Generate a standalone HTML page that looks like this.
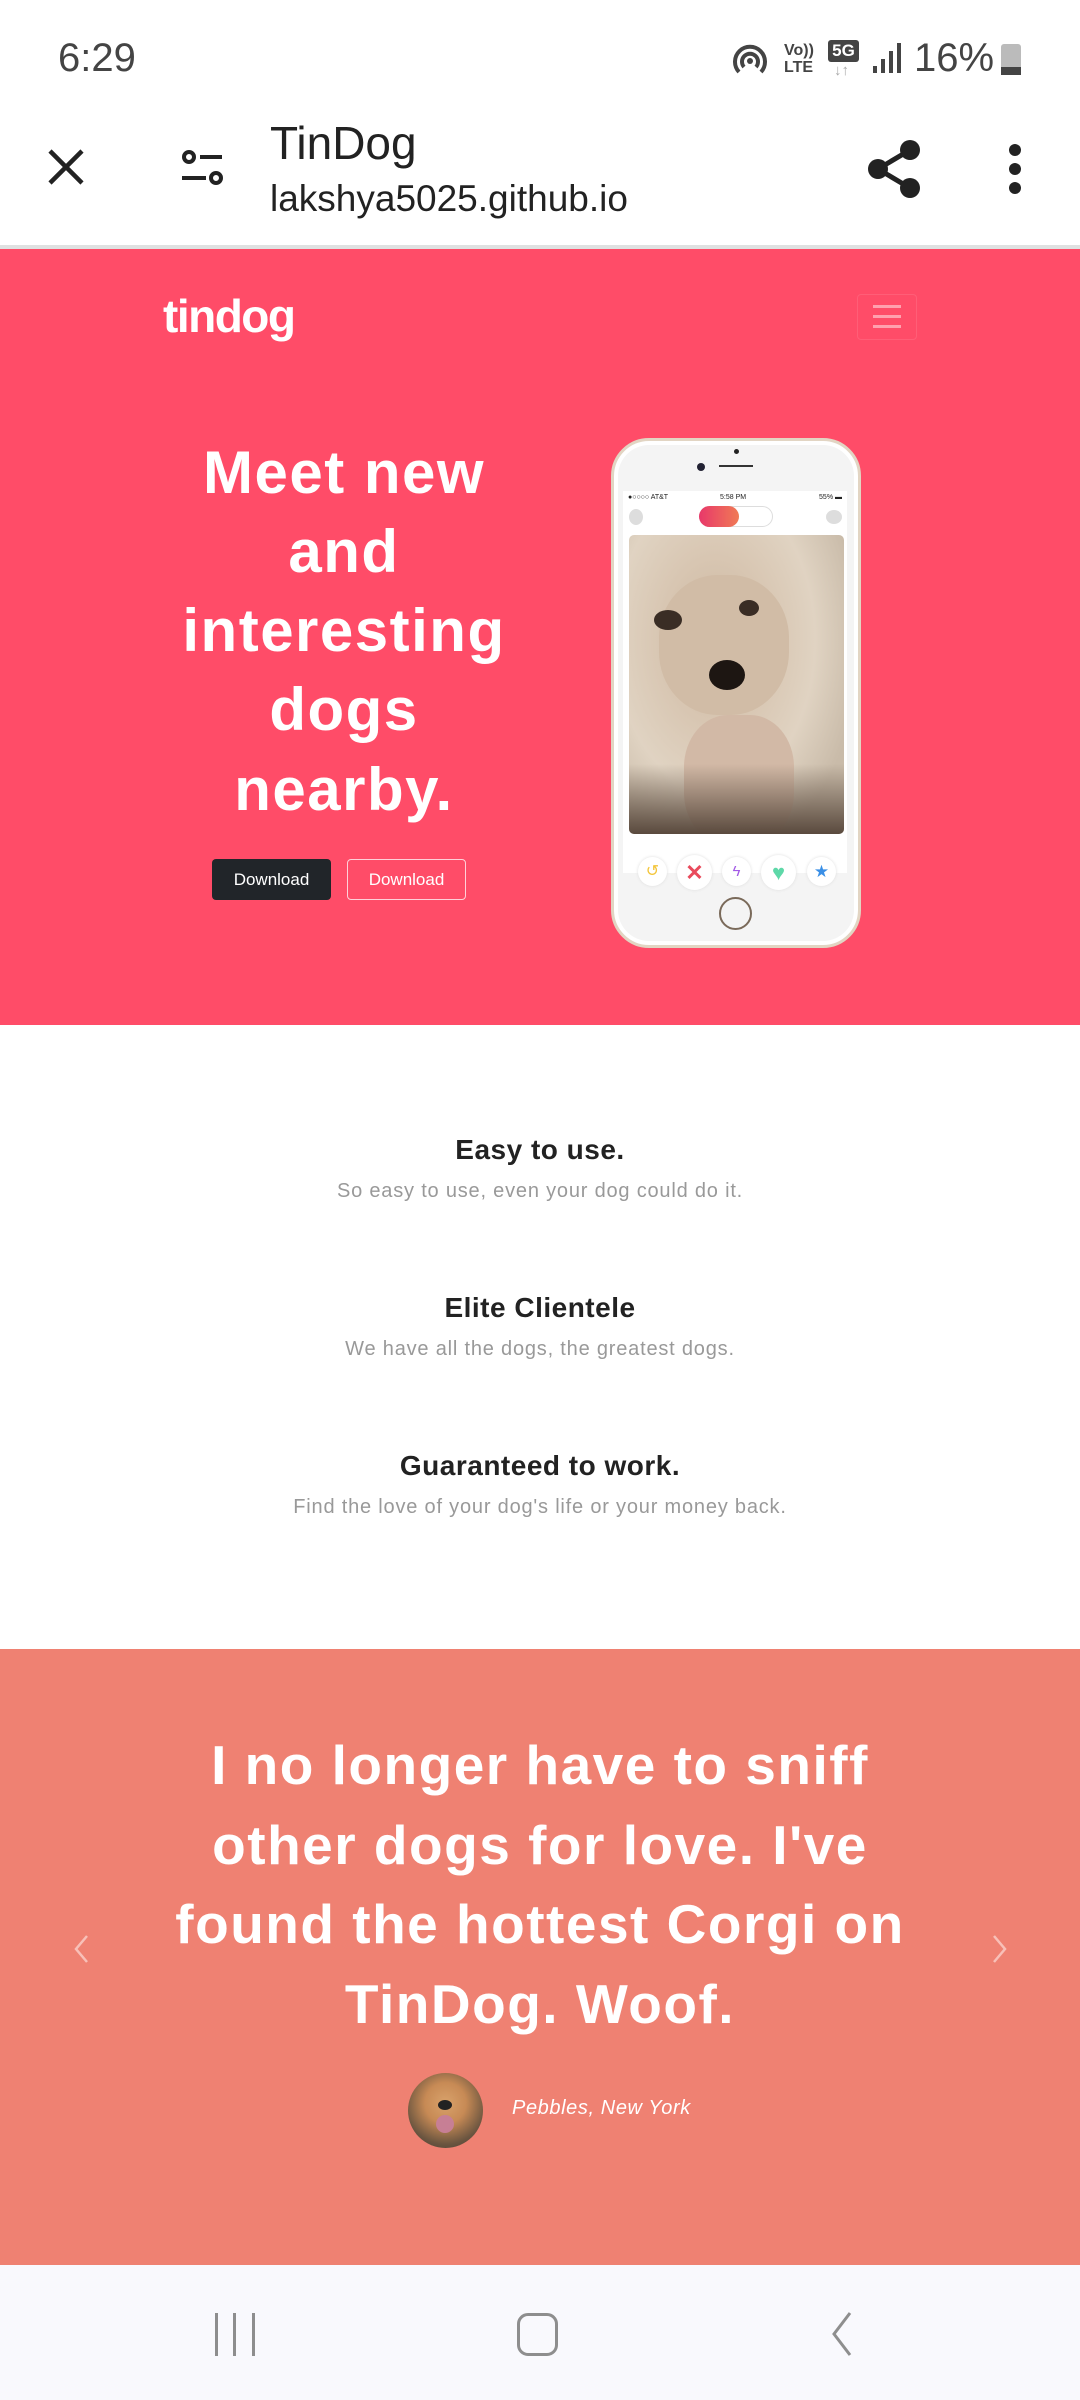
<!DOCTYPE html>
<html><head><meta charset="utf-8"><style>
*{margin:0;padding:0;box-sizing:border-box}
body{width:1080px;height:2400px;overflow:hidden;background:#fff;font-family:"Liberation Sans",sans-serif;position:relative}
.a{position:absolute}
.hl{position:absolute;left:0;width:688px;text-align:center;color:#fff;font-weight:900;font-size:60px;letter-spacing:1.5px}
.ft{position:absolute;left:0;width:1080px;text-align:center}
.ft b{display:block;font-size:28px;color:#222;letter-spacing:0.5px}
.sub{font-size:20px;color:#999;letter-spacing:0.8px}
.q{position:absolute;left:0;width:1080px;text-align:center;color:#fff;font-weight:bold;font-size:55px;letter-spacing:1.5px}
</style></head><body>
<!-- status bar -->
<div class="a" style="left:58px;top:36px;font-size:40px;color:#444">6:29</div>
<svg class="a" style="left:730px;top:40px" width="40" height="40" viewBox="0 0 40 40"><g fill="none" stroke="#444" stroke-width="4"><path d="M9 32a15 15 0 1 1 22 0"/><path d="M14 27a8 8 0 1 1 12 0"/></g><circle cx="20" cy="21" r="3" fill="#444"/></svg>
<div class="a" style="left:784px;top:42px;font-size:16px;line-height:17px;font-weight:bold;color:#444">Vo))<br>LTE</div>
<div class="a" style="left:828px;top:40px;width:31px;height:22px;background:#444;color:#fff;font-size:17px;font-weight:bold;text-align:center;line-height:22px;border-radius:3px">5G</div>
<div class="a" style="left:834px;top:62px;font-size:15px;color:#aaa">↓↑</div>
<svg class="a" style="left:872px;top:42px" width="30" height="32"><g fill="#444"><rect x="1" y="24" width="4" height="7"/><rect x="9" y="17" width="4" height="14"/><rect x="17" y="9" width="4" height="22"/><rect x="25" y="1" width="4" height="30"/></g></svg>
<div class="a" style="left:914px;top:36px;font-size:40px;color:#444">16%</div>
<div class="a" style="left:1001px;top:44px;width:20px;height:31px;background:#bbb;border-radius:3px"><div style="position:absolute;bottom:0;left:0;right:0;height:8px;background:#444"></div></div>
<!-- toolbar -->
<svg class="a" style="left:46px;top:147px" width="40" height="40"><path d="M4 4L36 36M36 4L4 36" stroke="#222" stroke-width="4.5"/></svg>
<svg class="a" style="left:180px;top:148px" width="46" height="40"><g stroke="#222" stroke-width="4" fill="none"><circle cx="9" cy="9" r="5"/><path d="M20 9H42M2 30H26"/><circle cx="36" cy="30" r="5"/></g></svg>
<div class="a" style="left:270px;top:116px;font-size:46px;color:#222">TinDog</div>
<div class="a" style="left:270px;top:178px;font-size:37px;color:#222">lakshya5025.github.io</div>
<svg class="a" style="left:866px;top:138px" width="56" height="62"><g fill="#222"><circle cx="44" cy="12" r="10"/><circle cx="12" cy="31" r="10"/><circle cx="44" cy="50" r="10"/></g><path d="M44 12L12 31L44 50" stroke="#222" stroke-width="5" fill="none"/></svg>
<svg class="a" style="left:1005px;top:142px" width="20" height="54"><g fill="#222"><circle cx="10" cy="8" r="6"/><circle cx="10" cy="27" r="6"/><circle cx="10" cy="46" r="6"/></g></svg>
<div class="a" style="left:0;top:245px;width:1080px;height:4px;background:#dfe1e1"></div>
<!-- hero -->
<div class="a" style="left:0;top:249px;width:1080px;height:776px;background:#ff4c68"></div>
<div class="a" style="left:163px;top:289px;font-size:46px;font-weight:bold;color:#fff;letter-spacing:-1.5px">tindog</div>
<div class="a" style="left:857px;top:294px;width:60px;height:46px;border:1px solid rgba(255,255,255,.1);border-radius:4px"></div>
<div class="a" style="left:873px;top:305px;width:28px;height:3px;background:#ffa0ae;box-shadow:0 10px 0 #ffa0ae,0 20px 0 #ffa0ae"></div>
<div class="hl" style="top:438px">Meet new</div>
<div class="hl" style="top:517px">and</div>
<div class="hl" style="top:596px">interesting</div>
<div class="hl" style="top:675px">dogs</div>
<div class="hl" style="top:755px">nearby.</div>
<div class="a" style="left:212px;top:859px;width:119px;height:41px;background:#212529;border-radius:4px;color:#fff;font-size:17px;text-align:center;line-height:41px">Download</div>
<div class="a" style="left:347px;top:859px;width:119px;height:41px;border:1px solid #ffd0d8;border-radius:4px;color:#fff;font-size:17px;text-align:center;line-height:39px">Download</div>
<!-- phone -->
<div class="a" style="left:611px;top:438px;width:250px;height:510px;background:#f4f4f4;border:3px solid #e2d5c3;border-radius:38px;box-shadow:inset 0 0 0 4px #fff"></div>
<div class="a" style="left:734px;top:449px;width:5px;height:5px;border-radius:50%;background:#222"></div>
<div class="a" style="left:697px;top:463px;width:8px;height:8px;border-radius:50%;background:#223"></div>
<div class="a" style="left:719px;top:465px;width:34px;height:2px;background:#333"></div>
<div class="a" style="left:623px;top:491px;width:224px;height:382px;background:#fff"></div>
<div class="a" style="left:628px;top:494px;font-size:7px;color:#222;width:214px">●○○○○ AT&amp;T<span style="position:absolute;left:92px">5:58 PM</span><span style="position:absolute;right:0">55% ▬</span></div>
<div class="a" style="left:699px;top:506px;width:74px;height:21px;border:1px solid #ddd;border-radius:11px"></div>
<div class="a" style="left:699px;top:506px;width:40px;height:21px;border-radius:11px;background:linear-gradient(90deg,#e8386a,#f07a55)"></div>
<div class="a" style="left:629px;top:509px;width:14px;height:16px;border-radius:50%;background:#ddd"></div>
<div class="a" style="left:826px;top:510px;width:16px;height:14px;border-radius:50%;background:#ddd"></div>
<div class="a" style="left:629px;top:535px;width:215px;height:299px;border-radius:5px;background:radial-gradient(ellipse at 40% 35%,#cbb7a0 0,#d8c6b2 30%,#e0d3c2 55%,#c9bba9 80%),#d8cbb8;overflow:hidden">
<div style="position:absolute;left:30px;top:40px;width:130px;height:140px;border-radius:45%;background:#d1bca6"></div>
<div style="position:absolute;left:25px;top:75px;width:28px;height:20px;border-radius:50%;background:#3a2d25"></div>
<div style="position:absolute;left:110px;top:65px;width:20px;height:16px;border-radius:50%;background:#3a2d25"></div>
<div style="position:absolute;left:80px;top:125px;width:36px;height:30px;border-radius:50%;background:#1d1612"></div>
<div style="position:absolute;left:55px;top:180px;width:110px;height:130px;border-radius:40%;background:#d2b9a6"></div>
<div style="position:absolute;left:0;bottom:0;width:100%;height:70px;background:linear-gradient(transparent,#5a4a3e)"></div></div>
<div class="a" style="left:638px;top:857px;width:29px;height:29px;border-radius:50%;background:#fff;box-shadow:0 0 3px #ddd;color:#f3c53a;font-size:16px;text-align:center;line-height:29px">↺</div>
<div class="a" style="left:677px;top:855px;width:35px;height:35px;border-radius:50%;background:#fff;box-shadow:0 0 3px #ddd;color:#e94a5c;font-size:22px;font-weight:bold;text-align:center;line-height:35px">✕</div>
<div class="a" style="left:722px;top:857px;width:29px;height:29px;border-radius:50%;background:#fff;box-shadow:0 0 3px #ddd;color:#a35ae6;font-size:15px;text-align:center;line-height:29px">ϟ</div>
<div class="a" style="left:761px;top:855px;width:35px;height:35px;border-radius:50%;background:#fff;box-shadow:0 0 3px #ddd;color:#5ed8a8;font-size:22px;text-align:center;line-height:35px">♥</div>
<div class="a" style="left:807px;top:857px;width:29px;height:29px;border-radius:50%;background:#fff;box-shadow:0 0 3px #ddd;color:#3a8fe6;font-size:17px;text-align:center;line-height:29px">★</div>
<div class="a" style="left:719px;top:897px;width:33px;height:33px;border-radius:50%;border:2px solid #7a6a5a"></div>
<!-- features -->
<div class="ft" style="top:1134px"><b>Easy to use.</b></div>
<div class="ft sub" style="top:1180px">So easy to use, even your dog could do it.</div>
<div class="ft" style="top:1292px"><b>Elite Clientele</b></div>
<div class="ft sub" style="top:1338px">We have all the dogs, the greatest dogs.</div>
<div class="ft" style="top:1450px"><b>Guaranteed to work.</b></div>
<div class="ft sub" style="top:1496px">Find the love of your dog's life or your money back.</div>
<!-- testimonial -->
<div class="a" style="left:0;top:1649px;width:1080px;height:616px;background:#ef8172"></div>
<div class="q" style="top:1733px">I no longer have to sniff</div>
<div class="q" style="top:1813px">other dogs for love. I've</div>
<div class="q" style="top:1892px">found the hottest Corgi on</div>
<div class="q" style="top:1972px">TinDog. Woof.</div>
<svg class="a" style="left:72px;top:1933px" width="20" height="32"><path d="M15 3L4 16L15 29" stroke="#f8c0b8" stroke-width="2.5" fill="none"/></svg>
<svg class="a" style="left:989px;top:1933px" width="20" height="32"><path d="M5 3L16 16L5 29" stroke="#f8c0b8" stroke-width="2.5" fill="none"/></svg>
<div class="a" style="left:408px;top:2073px;width:75px;height:75px;border-radius:50%;background:radial-gradient(circle at 50% 40%,#d9a26b 0,#c78a55 35%,#6b5540 70%,#3d3a30 100%);overflow:hidden"><div style="position:absolute;left:28px;top:42px;width:18px;height:18px;border-radius:50%;background:#c77f95"></div><div style="position:absolute;left:30px;top:27px;width:14px;height:10px;border-radius:50%;background:#222"></div></div>
<div class="a" style="left:512px;top:2097px;font-size:20px;font-style:italic;color:#fff;letter-spacing:0.6px">Pebbles, New York</div>
<!-- nav -->
<div class="a" style="left:0;top:2265px;width:1080px;height:135px;background:#f9f9fd"></div>
<div class="a" style="left:215px;top:2313px;width:3px;height:43px;background:#8e8e8e;box-shadow:18px 0 0 #8e8e8e,37px 0 0 #8e8e8e"></div>
<div class="a" style="left:517px;top:2313px;width:41px;height:43px;border:3px solid #8e8e8e;border-radius:11px"></div>
<svg class="a" style="left:826px;top:2310px" width="30" height="48"><path d="M24 3L8 24L24 45" stroke="#8e8e8e" stroke-width="3" fill="none"/></svg>
</body></html>
